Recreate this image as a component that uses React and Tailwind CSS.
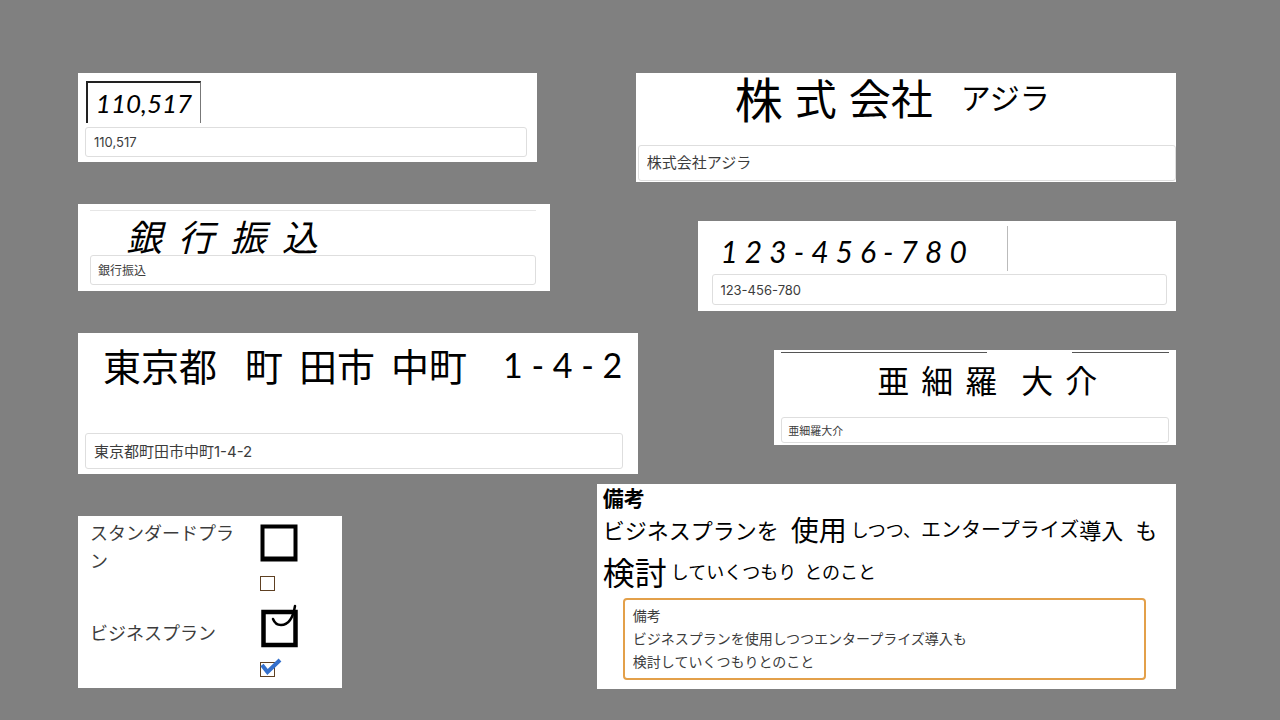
import React from 'react';
import clsx from 'clsx';

const HAND_KANJI = "font-['Noto_Sans_CJK_JP',sans-serif] font-normal";
const HAND_DIGITS = "font-['Lato',sans-serif] font-normal";

function FieldCard({ className, children }) {
  return <section className={clsx('flex flex-col bg-white text-black', className)}>{children}</section>;
}

function TextField({ label, value, className }) {
  return (
    <input
      type="text"
      aria-label={label}
      defaultValue={value}
      className={clsx(
        'w-full rounded-[3px] border border-[#dedede] bg-white text-[#3c3c3c] outline-none',
        className
      )}
    />
  );
}

function AmountCard() {
  return (
    <FieldCard className="w-[83.6%] pt-2 pr-[10px] pb-[5px] pl-[7px]">
      <div className="mb-1 ml-px flex h-[42px] w-[115px] items-center justify-center border-t-2 border-r border-l-2 border-t-[#222] border-r-[#777] border-l-[#222]">
        <span className={clsx(HAND_DIGITS, 'text-[26px] leading-none italic')}>110,517</span>
      </div>
      <TextField label="金額" value="110,517" className="h-[30px] px-2 text-[13px]" />
    </FieldCard>
  );
}

function PaymentCard() {
  return (
    <FieldCard className="w-[86%] pt-[6px] pr-[14px] pb-[6px] pl-3">
      <div className={clsx(HAND_KANJI, 'flex h-[45px] gap-4 border-t border-[#e6e6e6] pt-[5px] pl-9 text-[36px] leading-[38px] italic')}>
        <span>銀</span>
        <span>行</span>
        <span>振</span>
        <span>込</span>
      </div>
      <TextField label="支払方法" value="銀行振込" className="h-[30px] px-[7px] pb-[2px] text-xs" />
    </FieldCard>
  );
}

function AddressCard() {
  return (
    <FieldCard className="w-[102%] pt-3 pr-[15px] pb-[5px] pl-[7px]">
      <div className={clsx(HAND_KANJI, 'flex h-[88px] pl-[18px] text-[38px] leading-[40px] whitespace-nowrap')}>
        <span>東京都</span>
        <span className="ml-7">町</span>
        <span className="ml-4">田市</span>
        <span className="ml-4">中町</span>
        <span className={clsx(HAND_DIGITS, 'ml-9 text-[34px]')}>1 - 4 - 2</span>
      </div>
      <TextField label="住所" value="東京都町田市中町1-4-2" className="h-9 px-2 pb-[2px] text-[15px]" />
    </FieldCard>
  );
}

function PlanCard() {
  return (
    <FieldCard className="w-[48%] gap-[13px] pt-2 pr-3 pb-[11px] pl-3">
      <div className="flex gap-5">
        <label htmlFor="plan-standard" className="-mt-1 w-[150px] text-lg leading-7 text-[#3c3c3c]">
          スタンダードプラン
        </label>
        <div className="flex flex-col gap-[14px]">
          <svg width="38" height="38" viewBox="0 0 38 38" fill="none" stroke="#000" strokeWidth="4">
            <rect x="2.500" y="2.500" width="33" height="33" />
            <path d="M4 34.500h30" />
          </svg>
          <input
            id="plan-standard"
            type="checkbox"
            className="h-[15px] w-[15px] appearance-none border border-[#5e4022] bg-white"
          />
        </div>
      </div>
      <div className="flex gap-5">
        <label htmlFor="plan-business" className="w-[150px] pt-4 text-lg leading-7 text-[#3c3c3c]">
          ビジネスプラン
        </label>
        <div className="flex flex-col gap-[13px]">
          <svg width="39" height="45" viewBox="0 0 39 45" fill="none" stroke="#000">
            <rect x="3.500" y="8" width="32" height="33" strokeWidth="4.500" />
            <path d="M13 15c2 5 5 6 8 6 7 0 12-7 14-19" strokeWidth="2.500" strokeLinecap="round" />
          </svg>
          <div className="relative h-[15px] w-[15px]">
            <input
              id="plan-business"
              type="checkbox"
              defaultChecked
              className="block h-[15px] w-[15px] appearance-none border border-[#5e4022] bg-white"
            />
            <svg
              className="pointer-events-none absolute -top-1 left-0"
              width="22"
              height="18"
              viewBox="0 0 22 18"
              fill="none"
              stroke="#3470cc"
              strokeWidth="4"
            >
              <path d="M2 7l5.500 7L20 2" />
            </svg>
          </div>
        </div>
      </div>
    </FieldCard>
  );
}

function CompanyCard() {
  return (
    <FieldCard className="w-[98.4%] pb-[1px] pl-[2px]">
      <div className={clsx(HAND_KANJI, 'flex h-[72px] pl-[97px] text-[42px] leading-[48px] whitespace-nowrap')}>
        <span className="text-[48px]">株</span>
        <span className="ml-3">式</span>
        <span className="ml-3">会</span>
        <span>社</span>
        <span className="ml-7 text-[30px] leading-[46px]">アジラ</span>
      </div>
      <TextField label="会社名" value="株式会社アジラ" className="h-9 px-2 pb-1 text-[15px]" />
    </FieldCard>
  );
}

function PhoneCard() {
  return (
    <FieldCard className="w-[87%] pt-[5px] pr-[9px] pb-[6px] pl-[14px]">
      <div className="mb-[3px] flex h-[45px] w-[296px] items-center border-r border-[#bbb] pl-2">
        <span className={clsx(HAND_DIGITS, 'pt-1 text-[30px] leading-none whitespace-nowrap italic')}>
          1 2 3 - 4 5 6 - 7 8 0
        </span>
      </div>
      <TextField label="電話番号" value="123-456-780" className="h-[31px] px-[7px] text-[13px]" />
    </FieldCard>
  );
}

function NameCard() {
  return (
    <FieldCard className="w-[73.2%] px-[7px] pt-[2px] pb-[2px]">
      <div className="flex justify-between">
        <span className="h-px w-[53%] bg-[#555]" />
        <span className="h-px w-1/4 bg-[#555]" />
      </div>
      <div className={clsx(HAND_KANJI, 'flex h-16 gap-3 pt-2 pl-24 text-[32px] leading-[36px] whitespace-nowrap')}>
        <span>亜</span>
        <span>細</span>
        <span>羅</span>
        <span className="ml-3">大</span>
        <span>介</span>
      </div>
      <TextField label="氏名" value="亜細羅大介" className="h-[26px] px-[6px] text-[11px]" />
    </FieldCard>
  );
}

const remarks = `備考
ビジネスプランを使用しつつエンタープライズ導入も
検討していくつもりとのこと`;

function RemarksCard() {
  return (
    <FieldCard className="w-[105.5%] pt-[3px] pb-[9px] pl-[6px]">
      <h2 className="text-[21px] leading-6 font-bold">備考</h2>
      <div className={clsx(HAND_KANJI, 'flex h-9 items-center text-[22px] leading-none whitespace-nowrap')}>
        <span>ビジネスプランを</span>
        <span className="ml-3 text-[28px]">使用</span>
        <span className="ml-1 text-lg">しつつ、</span>
        <span className="text-xl">エンタープライズ</span>
        <span>導入</span>
        <span className="ml-3">も</span>
      </div>
      <div className={clsx(HAND_KANJI, 'mb-[3px] flex h-12 items-center text-lg leading-none whitespace-nowrap')}>
        <span className="text-[32px]">検討</span>
        <span className="ml-1">していくつもり</span>
        <span className="ml-2">とのこと</span>
      </div>
      <div className="pr-[30px] pl-5">
        <textarea
          aria-label="備考"
          defaultValue={remarks}
          rows={3}
          className="block h-[82px] w-full resize-none rounded-[4px] border-2 border-[#e3a04a] bg-white px-2 py-1 text-[14px] leading-[23px] text-[#3c3c3c] outline-none"
        />
      </div>
    </FieldCard>
  );
}

export default function App() {
  return (
    <main className="flex min-h-screen bg-[#808080] pt-[73px] pr-[104px] pb-[31px] pl-[78px] font-['Inter','Noto_Sans_CJK_JP',sans-serif]">
      <div className="flex w-1/2 flex-col items-start gap-[42px]">
        <AmountCard />
        <PaymentCard />
        <AddressCard />
        <PlanCard />
      </div>
      <div className="flex w-1/2 flex-col items-end gap-[39px]">
        <CompanyCard />
        <PhoneCard />
        <NameCard />
        <RemarksCard />
      </div>
    </main>
  );
}
